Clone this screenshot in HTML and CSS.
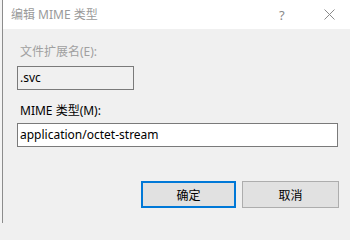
FILE: index.html
```html
<!DOCTYPE html>
<html lang="zh-CN">
<head>
<meta charset="utf-8">
<title>编辑 MIME 类型</title>
<link rel="stylesheet" href="styles.css">
</head>
<body>
<div class="window">
  <div class="titlebar">
    <span class="title">编辑 MIME 类型</span>
    <span class="help">?</span>
    <span class="close">
      <svg width="11" height="11" viewBox="0 0 11 11"><path d="M0.5 0.5 L10.5 10.5 M10.5 0.5 L0.5 10.5" stroke="#8a8a8a" stroke-width="1" fill="none"/></svg>
    </span>
  </div>
  <div class="content">
    <div class="label disabled">文件扩展名(E):</div>
    <div class="field field-ext">.svc</div>
    <div class="label">MIME 类型(M):</div>
    <div class="field field-mime">application/octet-stream</div>
    <div class="buttons">
      <div class="btn btn-default">确定</div>
      <div class="btn">取消</div>
    </div>
  </div>
</div>
</body>
</html>
```

FILE: styles.css
```css
html, body {
  margin: 0;
  padding: 0;
  background: #f0f0f0;
}
body {
  font-family: "Noto Sans", "Noto Sans CJK SC", sans-serif;
  font-size: 12px;
  color: #000;
  width: 350px;
  height: 223px;
  overflow: hidden;
  padding-left: 2px;
  box-sizing: border-box;
  background: #f4f4f4;
}
.window {
  border-left: 1px solid #8c8c8c;
  height: 223px;
  background: #f0f0f0;
  display: flex;
  flex-direction: column;
}
.titlebar {
  height: 29px;
  background: #fff;
  display: flex;
  align-items: center;
  padding-left: 8px;
}
.title {
  color: #9a9a9a;
  font-size: 12px;
  line-height: 16px;
  flex: 1;
}
.help {
  color: #8a8a8a;
  font-size: 13px;
  line-height: 16px;
  width: 8px;
  margin-right: 37px;
}
.close {
  display: flex;
  align-items: center;
  width: 11px;
  margin-right: 15px;
}
.close svg { display: block; }
.content {
  padding: 15px 11px 0 14px;
  display: flex;
  flex-direction: column;
}
.label {
  line-height: 16px;
  padding-left: 3px;
  height: 16px;
}
.disabled { color: #a0a0a0; }
.field {
  box-sizing: border-box;
  height: 24px;
  border: 1px solid #7a7a7a;
  line-height: 22px;
  padding-left: 2px;
  white-space: nowrap;
}
.field-ext {
  width: 117px;
  background: #f0f0f0;
  margin-top: 6px;
  margin-bottom: 13px;
}
.field-mime {
  width: 321px;
  background: #fff;
  margin-top: 4px;
}
.buttons {
  display: flex;
  justify-content: flex-end;
  gap: 6px;
  margin-top: 34px;
}
.btn {
  box-sizing: border-box;
  width: 97px;
  height: 27px;
  border: 1px solid #adadad;
  background: #e1e1e1;
  display: flex;
  align-items: center;
  justify-content: center;
  font-size: 12px;
}
.btn-default {
  width: 95px;
  border: 2px solid #0078d7;
}
```
